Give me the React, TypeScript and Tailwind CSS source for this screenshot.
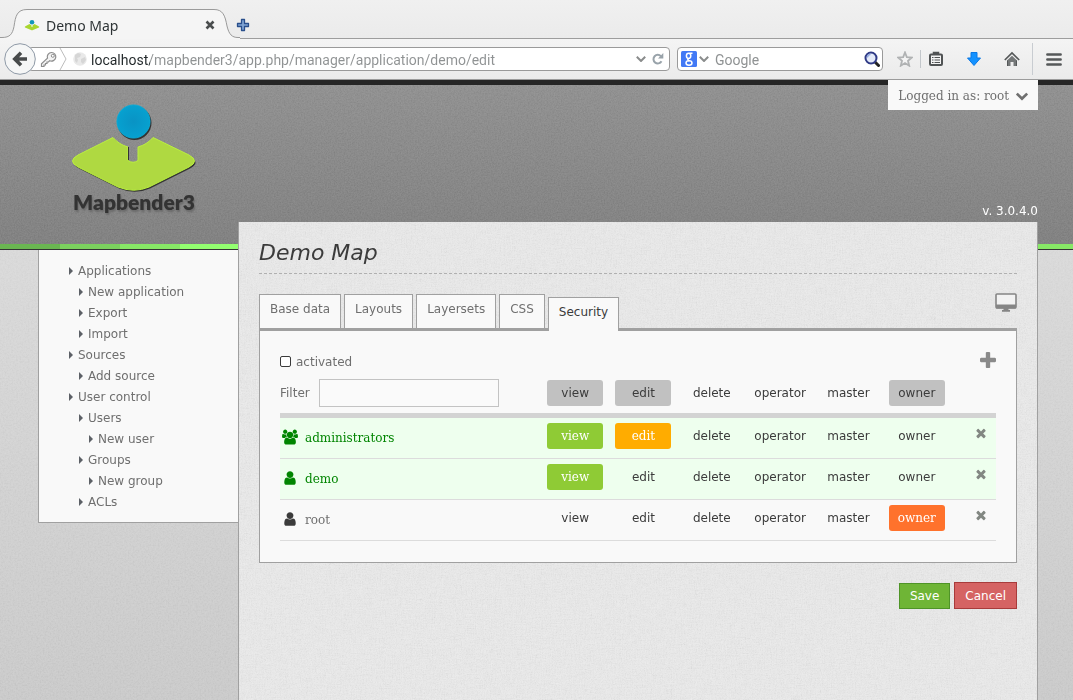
import { useState } from "react";
import type { ReactNode } from "react";

const USERS_PATH =
  "M593 896q-162 5-265 128h-134q-82 0-138-40.5t-56-118.5q0-353 124-353 6 0 43.5 21t97.5 42.5 119 21.5q67 0 133-23-5 37-5 66 0 139 81 256zm1071 637q0 120-73 189.5t-194 69.5h-874q-121 0-194-69.5t-73-189.5q0-53 3.5-103.5t14-109 26.5-108.5 43-97.5 62-81 85.5-53.5 111.5-20q10 0 43 21.5t73 48 107 48 135 21.5 135-21.5 107-48 73-48 43-21.5q61 0 111.5 20t85.5 53.5 62 81 43 97.5 26.5 108.5 14 109 3.5 103.5zm-1024-1277q0 106-75 181t-181 75-181-75-75-181 75-181 181-75 181 75 75 181zm704 384q0 159-112.5 271.5t-271.5 112.5-271.5-112.5-112.5-271.5 112.5-271.5 271.5-112.5 271.5 112.5 112.5 271.5zm576 225q0 78-56 118.5t-138 40.5h-134q-103-123-265-128 81-117 81-256 0-29-5-66 66 23 133 23 59 0 119-21.5t97.5-42.5 43.5-21q124 0 124 353zm-128-609q0 106-75 181t-181 75-181-75-75-181 75-181 181-75 181 75 75 181z";
const USER_PATH =
  "M1536 1399q0 109-62.5 187t-150.5 78h-854q-88 0-150.5-78t-62.5-187q0-85 8.5-160.5t31.5-152 58.5-131 94-89 134.5-34.5q131 128 313 128t313-128q76 0 134.5 34.5t94 89 58.5 131 31.5 152 8.5 160.5zm-256-887q0 159-112.5 271.5t-271.5 112.5-271.5-112.5-112.5-271.5 112.5-271.5 271.5-112.5 271.5 112.5 112.5 271.5z";
const TIMES_PATH =
  "M1490 1322q0 40-28 68l-136 136q-28 28-68 28t-68-28l-294-294-294 294q-28 28-68 28t-68-28l-136-136q-28-28-28-68t28-68l294-294-294-294q-28-28-28-68t28-68l136-136q28-28 68-28t68 28l294 294 294-294q28-28 68-28t68 28l136 136q28 28 28 68t-28 68l-294 294 294 294q28 28 28 68z";
const PLUS_PATH =
  "M1600 736v192q0 40-28 68t-68 28h-416v416q0 40-28 68t-68 28h-192q-40 0-68-28t-28-68v-416h-416q-40 0-68-28t-28-68v-192q0-40 28-68t68-28h416v-416q0-40 28-68t68-28h192q40 0 68 28t28 68v416h416q40 0 68 28t28 68z";
const CHEVRON_PATH =
  "M1683 808l-742 741q-19 19-45 19t-45-19l-742-741q-19-19-19-45.5t19-45.5l166-165q19-19 45-19t45 19l531 531 531-531q19-19 45-19t45 19l166 165q19 19 19 45.5t-19 45.5z";

/* One layer of fine surface texture, blended over a panel's background. */
function Grain({ id, freq, slope, seed = 4 }: { id: string; freq: string; slope: number; seed?: number }) {
  const mid = 0.5 - slope / 2;
  return (
    <svg className="pointer-events-none absolute inset-0 h-full w-full mix-blend-soft-light" aria-hidden="true">
      <filter id={id} x="0" y="0" width="100%" height="100%" colorInterpolationFilters="sRGB">
        <feTurbulence type="fractalNoise" baseFrequency={freq} numOctaves={3} seed={seed} />
        <feColorMatrix type="matrix" values="1 0 0 0 0  1 0 0 0 0  1 0 0 0 0  0 0 0 0 1" />
        <feComponentTransfer>
          <feFuncR type="linear" slope={slope} intercept={mid} />
          <feFuncG type="linear" slope={slope} intercept={mid} />
          <feFuncB type="linear" slope={slope} intercept={mid} />
        </feComponentTransfer>
      </filter>
      <rect width="100%" height="100%" filter={`url(#${id})`} />
    </svg>
  );
}

function TabStrip() {
  return (
    <div className="relative flex h-[39px] items-end border-b border-[#9d9d9d] bg-linear-to-b from-[#f0f0f0] to-[#ebebeb]">
      <svg className="absolute -bottom-px left-0 h-[30px] w-[240px]" viewBox="0 0 240 30" aria-hidden="true">
        <path
          d="M0 28.5h2c8 0 10.500-3.500 12-11C15.500 7 17 .5 27 .5h187c9 0 11 6 13 16.500 2 8.500 5 11.500 11 11.500h2V30H0z"
          fill="#f5f5f5"
        />
        <path
          d="M0 28.5h2c8 0 10.500-3.500 12-11C15.500 7 17 .5 27 .5h187c9 0 11 6 13 16.500 2 8.500 5 11.500 11 11.500h2"
          fill="none"
          stroke="#9a9a9a"
        />
      </svg>
      <div className="relative flex h-6 flex-1 items-center pl-6">
        <svg className="h-4 w-4" viewBox="0 0 16 16" aria-hidden="true">
          <path d="M1 8.500 5.500 6 7.500 7.500v1.500h1V7.500L10.500 6 15 8.500Q15.500 9 15 9.500l-6 2.500q-1 .5-2 0L1 9.500q-.5-.5 0-1z" fill="#a9d62f" />
          <circle cx="8" cy="4.300" r="2.300" fill="#1197b8" />
        </svg>
        <span className="ml-1.5 w-[156px] text-[14px] leading-5 text-[#2e3436]">Demo Map</span>
        <button type="button" aria-label="Close tab" className="flex h-4 w-4 items-center justify-center text-[#4a4d4e]">
          <svg className="mb-0.5 h-[10px] w-[10px]" viewBox="0 0 10 10" fill="none" stroke="currentColor" strokeWidth="2.600">
            <path d="M1.500 1.500l7 7M8.500 1.500l-7 7" />
          </svg>
        </button>
        <button type="button" aria-label="New tab" className="ml-[17px] flex h-4 w-4 items-center justify-center">
          <svg className="mb-0.5 h-[14px] w-[14px]" viewBox="0 0 14 14">
            <path d="M5.500 1.500h3v4h4v3h-4v4h-3v-4h-4v-3h4z" fill="#7fa3d3" stroke="#2a4f8c" strokeWidth="1.300" strokeLinejoin="round" />
          </svg>
        </button>
      </div>
    </div>
  );
}

function SmallChevron() {
  return (
    <svg className="h-[6px] w-[10px]" viewBox="0 0 10 6" fill="none" stroke="#8a8c8c" strokeWidth="2" aria-hidden="true">
      <path d="M.8.8 5 5 9.200.8" />
    </svg>
  );
}

function ToolbarButton({ label, children }: { label: string; children: ReactNode }) {
  return (
    <button type="button" aria-label={label} className="flex h-6 w-5 shrink-0 items-center justify-center">
      {children}
    </button>
  );
}

function Toolbar() {
  return (
    <div className="flex h-[41px] items-center border-b border-[#9b9b9b] bg-linear-to-b from-[#f4f4f4] to-[#ebebeb] pr-[9px] pl-1">
      <button type="button" aria-label="Back" className="relative z-10 h-8 w-8 shrink-0">
        <svg className="h-8 w-8" viewBox="0 0 32 32">
          <circle cx="16" cy="16" r="15.300" fill="#f5f6f6" stroke="#8e99a6" />
          <path d="M17 9.800 10.800 16l6.200 6.200M11.500 16H23" fill="none" stroke="#474a4b" strokeWidth="3.600" />
        </svg>
      </button>
      <div className="-ml-2 flex h-6 flex-1 items-center rounded-sm border border-[#9a9a9a] bg-white pr-[3px] pl-[11px]">
        <svg className="h-[17px] w-[18px] shrink-0" viewBox="0 0 18 17" aria-hidden="true">
          <path
            d="M11.500 1.500a4.300 4.300 0 1 1-1.800 8.200L8.500 11H7v1.500H5.500V14H4v1.500H1.500v-2.700l6-5.600a4.300 4.300 0 0 1 4-5.700z"
            fill="#f3f3f3"
            stroke="#8c8c8c"
            strokeWidth="1.200"
          />
          <circle cx="12.800" cy="4.800" r="1.500" fill="#fff" stroke="#8c8c8c" />
        </svg>
        <svg className="ml-px h-[22px] w-2 shrink-0" viewBox="0 0 8 22" fill="none" stroke="#bcbcbc" aria-hidden="true">
          <path d="M1 0l6 11-6 11" />
        </svg>
        <svg className="ml-1.5 h-[14px] w-[14px] shrink-0" viewBox="0 0 14 14" aria-hidden="true">
          <circle cx="7" cy="7" r="6.800" fill="#e9e9e9" />
          <path d="M2 3l3-2 3 1-1 3-3 1 1 2-1 3-2-2zM8 7l4-2 1 3-3 4-2-2z" fill="#d6d6d6" />
        </svg>
        <input
          aria-label="Address"
          defaultValue="localhost/mapbender3/app.php/manager/application/demo/edit"
          className="ml-1 h-[22px] min-w-0 flex-1 bg-[linear-gradient(90deg,#22282a_59px,#8f9293_59px)] bg-clip-text pt-0.5 font-['Roboto',sans-serif] text-[14px] text-transparent outline-none"
        />
        <SmallChevron />
        <button type="button" aria-label="Reload" className="ml-1 flex h-4 w-4 items-center justify-center">
          <svg className="h-3 w-3" viewBox="0 0 12 12" fill="none">
            <path d="M9.500 8.300a4.300 4.300 0 1 1-.5-5" stroke="#99a3aa" strokeWidth="2" />
            <path d="M11.300 0v5.500H6z" fill="#99a3aa" />
          </svg>
        </button>
      </div>
      <div className="ml-[7px] flex h-6 w-[206px] shrink-0 items-center rounded-sm border border-[#9a9a9a] bg-white pr-0.5 pl-[3px]">
        <svg className="h-4 w-4 shrink-0" viewBox="0 0 16 16" aria-hidden="true">
          <rect width="16" height="16" rx="1.500" fill="#4279f5" />
          <g fill="none" stroke="#fff" strokeWidth="1.500">
            <ellipse cx="7.600" cy="4.800" rx="2.200" ry="2.600" />
            <ellipse cx="8" cy="12" rx="3" ry="2.200" />
            <path d="M8.500 2.200h3M7.500 7.400c-1.500 1.100-.5 1.600 1 2.600" />
          </g>
        </svg>
        <div className="ml-0.5"><SmallChevron /></div>
        <input
          aria-label="Search"
          placeholder="Google"
          className="ml-1.5 h-[22px] min-w-0 flex-1 bg-transparent pt-0.5 font-['Roboto',sans-serif] text-[14px] text-[#2e3436] outline-none placeholder:text-[#8f9293]"
        />
        <button type="button" aria-label="Start search" className="flex h-4 w-4 items-center justify-center">
          <svg className="h-4 w-4" viewBox="0 0 16 16">
            <path d="M11 11l3.500 3.500" stroke="#222" strokeWidth="3" strokeLinecap="round" />
            <circle cx="7" cy="7" r="5.500" fill="#e4eaf8" stroke="#2f3a86" strokeWidth="2" />
            <path d="M3.300 6.500a3.800 3.800 0 0 1 3.200-3.200" stroke="#8fa6dd" fill="none" strokeWidth="1.500" />
          </svg>
        </button>
      </div>
      <div className="ml-3 flex shrink-0 items-center">
        <ToolbarButton label="Bookmark">
          <svg className="h-4 w-4" viewBox="0 0 16 16">
            <path d="M8 1.500l1.800 4.600 5 .4-3.800 3.300 1.200 4.900L8 12.100l-4.200 2.600L5 9.800 1.200 6.500l5-.4z" fill="#f4f4f4" stroke="#b0b2b3" strokeWidth="1.800" />
          </svg>
        </ToolbarButton>
        <span className="ml-[5px] h-[18px] w-px bg-[#c3c7cb]" />
        <div className="ml-[5px]">
          <ToolbarButton label="Bookmarks list">
            <svg className="h-4 w-4" viewBox="0 0 16 16" fill="none" stroke="#505354">
              <path d="M5.500 3V1.500h5V3" fill="#505354" strokeWidth="1.500" />
              <rect x="2" y="3.500" width="12" height="10.500" rx="1" strokeWidth="2" fill="#f4f4f4" />
              <path d="M4 6.500h1.500M6.500 6.500H12M4 9h1.500M6.500 9H12M4 11.500h1.500M6.500 11.500H12" strokeWidth="1" />
            </svg>
          </ToolbarButton>
        </div>
        <div className="ml-[18px]">
          <ToolbarButton label="Downloads">
            <svg className="h-4 w-4" viewBox="0 0 16 16">
              <path d="M5 1.500h6V7h3.500L8 14.500 1.500 7H5z" fill="#1492ff" stroke="#0a78e6" strokeLinejoin="round" />
            </svg>
          </ToolbarButton>
        </div>
        <div className="ml-[18px]">
          <ToolbarButton label="Home">
            <svg className="h-4 w-4" viewBox="0 0 16 16">
              <path d="M.8 9 8 2l7.200 7" fill="none" stroke="#555859" strokeWidth="1.700" />
              <path d="M3 9.500 8 4.800l5 4.700V15H9.500v-4h-3v4H3z" fill="#747778" />
              <path d="M3.500 9.500V15M12.500 9.500V15" stroke="#555859" />
            </svg>
          </ToolbarButton>
        </div>
        <span className="ml-[10px] h-8 w-px bg-[#c8ccd1]" />
        <div className="ml-[11px]">
          <ToolbarButton label="Open menu">
            <svg className="h-[13px] w-4" viewBox="0 0 16 13" stroke="#555859" strokeWidth="2.600" strokeLinecap="round">
              <path d="M1.400 1.500h13.200M1.400 6.500h13.200M1.400 11.500h13.200" />
            </svg>
          </ToolbarButton>
        </div>
      </div>
    </div>
  );
}

function Logo() {
  return (
    <a href="#home" className="flex w-[126px] flex-col items-center">
      <svg className="h-[88px] w-[126px]" viewBox="0 0 126 88" aria-hidden="true">
        <defs>
          <radialGradient id="ball">
            <stop offset="0" stopColor="#0993c4" />
            <stop offset="1" stopColor="#06a1d0" />
          </radialGradient>
        </defs>
        <g fill="#333" transform="translate(1 1.500)">
          <circle cx="62.500" cy="17.500" r="17" />
          <path d="M42 33.500Q48 40.500 57 43v13.500Q62 60 67 56.500V43q9-2.500 15-9.500l36 17.500q11 6 0 12L78 83q-15 6.500-31 0L7 63q-11-6 0-12z" />
        </g>
        <circle cx="62.500" cy="17.500" r="16.600" fill="url(#ball)" stroke="#07aedb" strokeWidth=".8" />
        <path
          d="M42 33.500Q48 40.500 57 43v13.500Q62 60 67 56.500V43q9-2.500 15-9.500l36 17.500q11 6 0 12L78 83q-15 6.500-31 0L7 63q-11-6 0-12z"
          fill="#afd941"
          stroke="#baf03f"
        />
        <path d="M57.500 43v13" stroke="#333" />
      </svg>
      <span className="font-['Lato','Open_Sans',sans-serif] text-[21px] leading-5 font-extrabold text-[#333] [text-shadow:1px_2px_2px_#6a6a6a]">
        Mapbender3
      </span>
    </a>
  );
}

const MENU: { label: string; depth: 0 | 1 | 2 }[] = [
  { label: "Applications", depth: 0 },
  { label: "New application", depth: 1 },
  { label: "Export", depth: 1 },
  { label: "Import", depth: 1 },
  { label: "Sources", depth: 0 },
  { label: "Add source", depth: 1 },
  { label: "User control", depth: 0 },
  { label: "Users", depth: 1 },
  { label: "New user", depth: 2 },
  { label: "Groups", depth: 1 },
  { label: "New group", depth: 2 },
  { label: "ACLs", depth: 1 },
];
const INDENT = { 0: "pl-0", 1: "pl-[10px]", 2: "pl-5" };

function Sidebar() {
  return (
    <nav className="relative w-[200px] shrink-0 self-start border-b border-l border-[#a0a0a0] bg-[#f9f9f9] pt-[10px] pb-[10px] pl-[30px]">
      <ul>
        {MENU.map((m) => (
          <li key={m.label} className={INDENT[m.depth]}>
            <a href="#menu" className="flex h-[21px] items-center gap-[5px]">
              <svg className="h-2 w-1" viewBox="0 0 4 8" fill="#5c6066" aria-hidden="true">
                <path d="M0 0l4 4-4 4z" />
              </svg>
              {m.label}
            </a>
          </li>
        ))}
      </ul>
    </nav>
  );
}

const TABS = ["Base data", "Layouts", "Layersets", "CSS"];
const RIGHTS = ["view", "edit", "delete", "operator", "master", "owner"];
const HEADER_ACTIVE = ["view", "edit", "owner"];
const ACTIVE_COLOR: Record<string, string> = {
  view: "bg-[#8fcb35]",
  edit: "bg-[#ffac00]",
  owner: "bg-[#ff722c]",
};

type Entry = { name: string; group: boolean; granted: string[] };
const ENTRIES: Entry[] = [
  { name: "administrators", group: true, granted: ["view", "edit"] },
  { name: "demo", group: false, granted: ["view"] },
  { name: "root", group: false, granted: ["owner"] },
];

function SecurityTable() {
  const [entries, setEntries] = useState(ENTRIES);
  const toggle = (name: string, right: string) =>
    setEntries((list) =>
      list.map((e) =>
        e.name === name
          ? { ...e, granted: e.granted.includes(right) ? e.granted.filter((r) => r !== right) : [...e.granted, right] }
          : e,
      ),
    );
  return (
    <table className="w-full table-fixed border-separate border-spacing-0">
      <colgroup>
        <col className="w-[261px]" />
        {RIGHTS.map((r) => (
          <col key={r} />
        ))}
        <col className="w-[45px]" />
      </colgroup>
      <thead>
        <tr>
          <th className="border-b-5 border-[#d3d3d3] pb-1.5 text-left font-normal">
            <div className="flex items-center gap-[9px]">
              <label htmlFor="filter">Filter</label>
              <input id="filter" className="h-7 w-[180px] border border-[#c3c3c3] bg-[#fafafa] px-1 outline-none" />
            </div>
          </th>
          {RIGHTS.map((r) => (
            <th key={r} className="border-b-5 border-[#d3d3d3] pb-1.5 font-normal">
              <button
                type="button"
                className={`h-[26px] w-14 rounded-[3px] text-[#3b3b3b] ${HEADER_ACTIVE.includes(r) ? "bg-[#c1c1c1]" : ""}`}
              >
                {r}
              </button>
            </th>
          ))}
          <th className="border-b-5 border-[#d3d3d3]" />
        </tr>
      </thead>
      <tbody>
        {entries.map((e) => {
          const viewer = e.granted.includes("view");
          const cell = `h-[41px] border-b border-[#dcdcdc] ${viewer ? "bg-[#eeffee]" : ""}`;
          return (
            <tr key={e.name}>
              <td className={cell}>
                <div
                  className={`flex items-center gap-[7px] font-['DejaVu_Serif',serif] ${viewer ? "text-[#008500]" : "text-[#6f6f6f]"}`}
                >
                  <svg
                    className={`mb-0.5 ml-0.5 h-4 w-4 ${viewer ? "" : "text-[#3b3b3b]"}`}
                    viewBox={e.group ? "0 0 1920 1792" : "0 0 1792 1792"}
                    fill="currentColor"
                    aria-hidden="true"
                  >
                    <path d={e.group ? USERS_PATH : USER_PATH} />
                  </svg>
                  {e.name}
                </div>
              </td>
              {RIGHTS.map((r) => {
                const on = e.granted.includes(r);
                return (
                  <td key={r} className={`pb-1 text-center ${cell}`}>
                    <button
                      type="button"
                      aria-pressed={on}
                      onClick={() => toggle(e.name, r)}
                      className={`h-[26px] w-14 rounded-[3px] align-middle ${
                        on ? `font-['DejaVu_Serif',serif] text-white ${ACTIVE_COLOR[r] ?? "bg-[#8fcb35]"}` : "text-[#3b3b3b]"
                      }`}
                    >
                      {r}
                    </button>
                  </td>
                );
              })}
              <td className={`pb-[10px] ${cell}`}>
                <button
                  type="button"
                  aria-label={`Remove ${e.name}`}
                  onClick={() => setEntries((l) => l.filter((x) => x.name !== e.name))}
                  className="ml-[23px] block text-[#828782]"
                >
                  <svg className="h-3.5 w-3.5" viewBox="0 0 1792 1792" fill="currentColor">
                    <path d={TIMES_PATH} />
                  </svg>
                </button>
              </td>
            </tr>
          );
        })}
      </tbody>
    </table>
  );
}

function Content() {
  const [activated, setActivated] = useState(false);
  return (
    <main className="relative -mt-7 min-w-0 flex-1 border-r border-l border-[#a0a0a0]">
      <div className="absolute inset-0 isolate bg-[#e7e7e7]">
        <Grain id="weft" freq="0.08 0.9" slope={0.2} />
        <Grain id="warp" freq="0.9 0.08" slope={0.2} seed={9} />
        <Grain id="fibre" freq="0.8" slope={0.5} seed={2} />
      </div>
      <div className="relative px-5 pt-[17px]">
        <h1 className="border-b border-dashed border-[#b0b0b0] pb-1.5 text-[22px] leading-7 text-[#3b3b3b] italic">Demo Map</h1>
        <div className="mt-5 flex h-[34px] items-end gap-[3px]">
          {TABS.map((t) => (
            <button key={t} type="button" className="h-[34px] border border-b-0 border-[#a0a0a0] bg-[#f9f9f9] px-[10px] pb-1.5">
              {t}
            </button>
          ))}
          <button
            type="button"
            className="relative z-10 -mb-[3px] h-[34px] border border-b-0 border-[#a0a0a0] bg-[#f9f9f9] px-[10px] pb-1.5 text-[#3b3b3b]"
          >
            Security
          </button>
          <a href="#view" aria-label="View application" className="mb-4 ml-auto">
            <svg className="h-[19px] w-[22px]" viewBox="0 0 22 19" aria-hidden="true">
              <rect x="1" y="1" width="20" height="14" rx="1" fill="#f2f2f2" stroke="#858585" strokeWidth="1.600" />
              <path d="M1 11.500h20V15q0 .5-1 .5H2q-1 0-1-.5zM8.500 15.500h5V17H15v1.700H7V17h1.500z" fill="#858585" />
            </svg>
          </a>
        </div>
        <section className="border border-t-3 border-[#a0a0a0] bg-[#f9f9f9] px-5 pt-5 pb-[21px]">
          <div className="mb-[7px] flex h-[21px] items-start justify-between">
            <label className="flex h-[21px] items-center gap-[5px]">
              <input
                type="checkbox"
                checked={activated}
                onChange={(e) => setActivated(e.target.checked)}
                className="h-[11px] w-[11px] appearance-none rounded-[2px] border border-[#3b3b3b] bg-white checked:bg-[#3b3b3b]"
              />
              activated
            </label>
            <button type="button" aria-label="Add entry" className="mt-px text-[#8a8a8a]">
              <svg className="h-4 w-4" viewBox="192 128 1408 1408" fill="currentColor">
                <path d={PLUS_PATH} />
              </svg>
            </button>
          </div>
          <SecurityTable />
        </section>
        <div className="mt-[19px] flex items-end justify-end gap-1 text-white">
          <button type="button" className="h-[26px] border border-[#4f9427] bg-[#6fb536] px-[10px]">
            Save
          </button>
          <button type="button" className="h-[27px] border border-[#a83b3b] bg-[#d56363] px-[10px]">
            Cancel
          </button>
        </div>
      </div>
    </main>
  );
}

export default function App() {
  return (
    <div className="flex min-h-screen flex-col font-['DejaVu_Sans',sans-serif] text-[12px] text-[#6f6f6f]">
      <div className="font-['Noto_Sans','Open_Sans',sans-serif]">
        <TabStrip />
        <Toolbar />
      </div>
      <header className="relative border-t-5 border-[#262626] bg-linear-to-b from-[#929292] to-[#828282]">
        <Grain id="steel" freq="0.7" slope={0.2} />
        <div className="relative flex h-[159px] justify-between pr-[35px] pl-[71px]">
          <div className="pt-[19px]">
            <Logo />
          </div>
          <div className="-mt-[5px] flex flex-col items-end justify-between pb-[25px]">
            <button
              type="button"
              className="flex h-[30px] items-center gap-[7px] bg-[#f9f9f9] px-[10px] pt-0.5 font-['DejaVu_Serif',serif] text-[#6f6f6f]"
            >
              Logged in as: root
              <svg className="h-3 w-3" viewBox="90 160 1612 1612" fill="currentColor" aria-hidden="true">
                <path d={CHEVRON_PATH} />
              </svg>
            </button>
            <span className="leading-4 text-white">v. 3.0.4.0</span>
          </div>
        </div>
        <div className="relative flex h-1.5 border-b border-[#333] bg-[#87e866]">
          <span className="w-[60px] bg-[#6ab651]" />
          <span className="w-[60px] bg-[#7bd15e]" />
          <span className="w-[60px] bg-[#87e866]" />
          <span className="w-[60px] bg-[#93ff70]" />
        </div>
      </header>
      <div className="relative flex flex-1 bg-linear-to-b from-[#dadada] to-[#cbcbcb] pr-[35px] pl-[38px]">
        <Grain id="page" freq="0.6" slope={0.25} />
        <Sidebar />
        <Content />
      </div>
    </div>
  );
}
